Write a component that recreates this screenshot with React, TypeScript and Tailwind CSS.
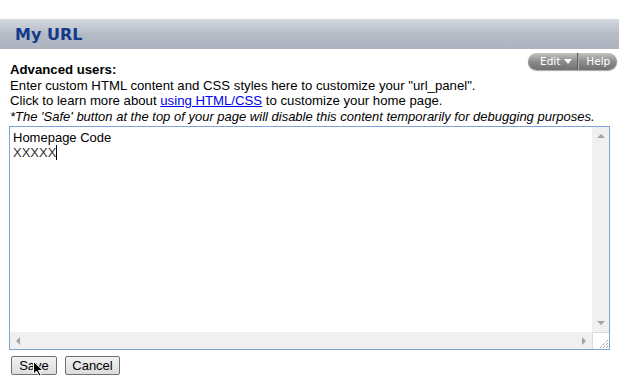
import React from "react";

const ScrollArrow = ({ dir }: { dir: "up" | "down" | "left" | "right" }) => {
  const pts: Record<string, string> = {
    up: "1,5 5,1 9,5",
    down: "1,1 5,5 9,1",
    left: "5,1 1,5 5,9",
    right: "1,1 5,5 1,9",
  };
  const w = dir === "up" || dir === "down" ? 10 : 6;
  const h = dir === "up" || dir === "down" ? 6 : 10;
  return (
    <svg width={w} height={h} viewBox={`0 0 ${w} ${h}`}>
      <polygon points={pts[dir]} fill="#a3a3a3" />
    </svg>
  );
};

export default function App() {
  return (
    <div className="w-[627px] h-[377px] bg-white relative overflow-hidden font-['Liberation_Sans',Arial,sans-serif] text-[13px] text-black">
      <div className="h-[19px]" />
      {/* Title bar */}
      <div className="w-[619px] h-[30px] bg-gradient-to-b from-[#d6d9e0] via-[#b5bbc6] to-[#adb3bf] flex items-center pl-[15px]">
        <h1 className="font-['DejaVu_Sans',Verdana,sans-serif] font-bold text-[16px] text-[#15398a] leading-none pt-[1px]">
          My URL
        </h1>
      </div>

      {/* Edit / Help pill */}
      <div className="flex justify-end w-[617px] mt-[4px] h-[17px]">
        <div className="flex items-center h-[17px] w-[89px] rounded-full bg-gradient-to-b from-[#c4c4c4] via-[#8c8c8c] to-[#707070] shadow-[0_1px_1px_rgba(0,0,0,0.35)] font-['DejaVu_Sans',Verdana,sans-serif] text-[10.5px] text-white leading-none">
          <div className="flex items-center gap-[4px] pl-[12px] pr-[5px] h-full border-r border-[#5e5e5e]">
            <span>Edit</span>
            <svg width="8" height="5" viewBox="0 0 8 5">
              <polygon points="0,0 8,0 4,5" fill="#fff" />
            </svg>
          </div>
          <div className="pl-[7px] h-full flex items-center border-l border-[#a8a8a8]">Help</div>
        </div>
      </div>

      {/* Description */}
      <div className="pl-[10px] leading-[15.5px] -mt-[8px] text-[13.2px]">
        <div className="font-bold">Advanced users:</div>
        <div>Enter custom HTML content and CSS styles here to customize your "url_panel".</div>
        <div>
          Click to learn more about{" "}
          <a className="text-[#0000ee] underline" href="#">
            using HTML/CSS
          </a>{" "}
          to customize your home page.
        </div>
        <div className="italic text-[13px]">
          *The 'Safe' button at the top of your page will disable this content temporarily for debugging purposes.
        </div>
      </div>

      {/* Textarea */}
      <div className="ml-[9px] mt-[2px] w-[601px] h-[224px] border border-[#7fa3d6] flex flex-col">
        <div className="flex flex-1 min-h-0">
          <div className="flex-1 pl-[3px] pt-[3px] leading-[15px]">
            <div>Homepage Code</div>
            <div className="flex items-center">
              <span className="text-[#333]">XXXXX</span>
              <span className="inline-block w-[1px] h-[15px] bg-black" />
            </div>
          </div>
          <div className="w-[17px] bg-[#f0f0f0] flex flex-col justify-between items-center py-[6px]">
            <ScrollArrow dir="up" />
            <ScrollArrow dir="down" />
          </div>
        </div>
        <div className="flex h-[17px]">
          <div className="flex-1 bg-[#f0f0f0] flex items-center justify-between px-[5px]">
            <ScrollArrow dir="left" />
            <ScrollArrow dir="right" />
          </div>
          <div className="w-[17px] bg-white border-l border-t border-[#dcdcdc] flex items-end justify-end">
            <svg width="12" height="12" viewBox="0 0 12 12">
              <path d="M11 3 L3 11 M11 6 L6 11 M11 9 L9 11" stroke="#777" strokeWidth="1" strokeDasharray="1 1" />
            </svg>
          </div>
        </div>
      </div>

      {/* Buttons */}
      <div className="flex gap-[8px] pl-[11px] mt-[6px]">
        <button className="w-[46px] h-[19px] border border-[#707070] rounded-[2px] bg-gradient-to-b from-[#f2f2f2] to-[#dddddd] text-[13px] leading-none">
          Save
        </button>
        <button className="w-[55px] h-[19px] border border-[#707070] rounded-[2px] bg-gradient-to-b from-[#f2f2f2] to-[#dddddd] text-[13px] leading-none">
          Cancel
        </button>
      </div>

      {/* Mouse pointer */}
      <svg className="absolute left-[33px] top-[361px]" width="12" height="16" viewBox="0 0 12 16">
        <path d="M0.5 0.5 L0.5 13 L3.5 10 L6 15 L8 14 L5.5 9.5 L10 9.5 Z" fill="#000" stroke="#fff" strokeWidth="1" />
      </svg>
    </div>
  );
}
